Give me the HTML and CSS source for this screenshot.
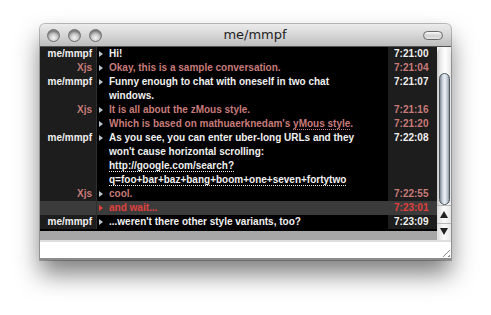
FILE: index.html
```html
<!DOCTYPE html>
<html>
<head>
<meta charset="utf-8">
<link rel="stylesheet" href="styles.css">
</head>
<body>
<div class="shadow">
<div class="window">
  <div class="titlebar">
    <div class="lights"><span class="light"></span><span class="light"></span><span class="light"></span></div>
    <div class="title">me/mmpf</div>
    <div class="pillbox"><span class="pill"></span></div>
  </div>
  <div class="main">
    <div class="chat">
      <div class="rows">
        <div class="row me"><div class="name">me/mmpf</div><div class="msg"><span class="arrow"></span><span class="text">Hi!</span></div><div class="time">7:21:00</div></div>
        <div class="row xjs"><div class="name">Xjs</div><div class="msg"><span class="arrow"></span><span class="text">Okay, this is a sample conversation.</span></div><div class="time">7:21:04</div></div>
        <div class="row me"><div class="name">me/mmpf</div><div class="msg"><span class="arrow"></span><span class="text">Funny enough to chat with oneself in two chat windows.</span></div><div class="time">7:21:07</div></div>
        <div class="row xjs"><div class="name">Xjs</div><div class="msg"><span class="arrow"></span><span class="text">It is all about the zMous style.</span></div><div class="time">7:21:16</div></div>
        <div class="row xjs"><div class="name"></div><div class="msg"><span class="arrow"></span><span class="text">Which is based on mathuaerknedam's <a class="link">yMous style</a>.</span></div><div class="time">7:21:20</div></div>
        <div class="row me"><div class="name">me/mmpf</div><div class="msg"><span class="arrow"></span><span class="text">As you see, you can enter uber-long URLs and they won't cause horizontal scrolling: <a class="link">http://google.com/search?<br>q=foo+bar+baz+bang+boom+one+seven+fortytwo</a></span></div><div class="time">7:22:08</div></div>
        <div class="row xjs"><div class="name">Xjs</div><div class="msg"><span class="arrow"></span><span class="text">cool.</span></div><div class="time">7:22:55</div></div>
        <div class="row alert"><div class="name"></div><div class="msg"><span class="arrow"></span><span class="text">and wait...</span></div><div class="time">7:23:01</div></div>
        <div class="row me"><div class="name">me/mmpf</div><div class="msg"><span class="arrow"></span><span class="text">...weren't there other style variants, too?</span></div><div class="time">7:23:09</div></div>
      </div>
      <div class="filler"></div>
    </div>
    <div class="scrollbar">
      <div class="track"><div class="thumb"></div></div>
      <div class="btn up"><span class="tri-up"></span></div>
      <div class="btn down"><span class="tri-down"></span></div>
    </div>
  </div>
  <div class="input"><span class="grip"></span></div>
</div>
</div>
</body>
</html>
```

FILE: styles.css
```css
html, body {
  margin: 0;
  padding: 0;
  background: #ffffff;
}
body {
  padding: 24px 0 0 40px;
  min-height: 315px;
  box-sizing: border-box;
}
.shadow {
  width: 411px;
  height: 236px;
  border-radius: 5px 5px 0 0;
  box-shadow: 0 14px 24px rgba(0,0,0,0.5), 0 0 0 1px rgba(0,0,0,0.25);
}
.window {
  width: 411px;
  height: 236px;
  display: flex;
  flex-direction: column;
  border-radius: 5px 5px 0 0;
  background: #a7a7a7;
  overflow: hidden;
}
.titlebar {
  height: 22px;
  flex: none;
  display: flex;
  align-items: center;
  background: linear-gradient(#ececec, #d6d6d6 50%, #bdbdbd);
  border-bottom: 1px solid #555;
  font-family: "DejaVu Sans", sans-serif;
}
.lights {
  width: 90px;
  box-sizing: border-box;
  padding-left: 7px;
  display: flex;
  gap: 8px;
}
.light {
  width: 13px;
  height: 13px;
  box-sizing: border-box;
  border-radius: 50%;
  border: 1px solid #6f6f6f;
  background: radial-gradient(circle at 50% 72%, #f6f6f6 0, #cfcfcf 35%, #9d9d9d 75%, #8a8a8a 100%);
  box-shadow: inset 0 2px 2px rgba(0,0,0,0.25);
}
.title {
  flex: 1;
  text-align: center;
  font-size: 13px;
  color: #1e1e1e;
  line-height: 22px;
}
.pillbox {
  width: 71px;
  box-sizing: border-box;
  padding-right: 8px;
  display: flex;
  justify-content: flex-end;
}
.pill {
  width: 20px;
  height: 9px;
  box-sizing: border-box;
  border: 1px solid #6a6a6a;
  border-radius: 5px;
  background: linear-gradient(#fafafa, #d0d0d0 55%, #e8e8e8);
}
.main {
  height: 193px;
  flex: none;
  display: flex;
}
.chat {
  flex: 1;
  display: flex;
  flex-direction: column;
}
.rows {
  background: #000;
  padding-bottom: 2px;
  font-family: "Liberation Sans", Arial, sans-serif;
  font-weight: bold;
  font-size: 10px;
  line-height: 14px;
}
.row {
  display: grid;
  grid-template-columns: 57px 1fr 49px;
}
.name {
  background: #1d1d1d;
  border-right: 1px solid #2e2e2e;
  text-align: right;
  padding-right: 4px;
}
.msg {
  display: flex;
  padding-right: 18px;
}
.arrow {
  flex: none;
  width: 0;
  height: 0;
  margin: 4px 6px 0 2px;
  border-left: 4px solid #b8c4d0;
  border-top: 3px solid transparent;
  border-bottom: 3px solid transparent;
}
.text {
  flex: 1;
}
.time {
  background: #1d1d1d;
  padding-left: 6px;
}
.me { color: #f0f0f0; }
.xjs { color: #c77b79; }
.alert { color: #e0403e; }
.alert .name, .alert .msg, .alert .time { background: #3b3b3b; }
.alert .arrow { border-left-color: #e0403e; }
.link {
  text-decoration: none;
  border-bottom: 1px dotted currentColor;
}
.filler {
  flex: 1;
  background: #a7a7a7;
}
.scrollbar {
  width: 14px;
  flex: none;
  display: flex;
  flex-direction: column;
  background: #f2f2f2;
}
.track {
  flex: 1;
  border-radius: 7px 7px 0 0;
  background: linear-gradient(to right, #c8c8c8, #efefef 30%, #ffffff 60%, #e6e6e6);
  padding: 26px 1px 0 2px;
  display: flex;
  flex-direction: column;
}
.thumb {
  height: 132px;
  border-radius: 6px;
  border: 1px solid #4e5660;
  box-sizing: border-box;
  background: linear-gradient(to right, #7d8894, #cdd5de 30%, #eef2f6 55%, #b5bec8 85%, #8a95a0);
}
.btn {
  height: 17px;
  display: flex;
  align-items: center;
  justify-content: center;
  background: linear-gradient(to right, #dcdcdc, #fafafa 50%, #e8e8e8);
  border-top: 1px solid #b8b8b8;
}
.tri-up {
  width: 0; height: 0;
  border-left: 4px solid transparent;
  border-right: 4px solid transparent;
  border-bottom: 7px solid #222;
}
.tri-down {
  width: 0; height: 0;
  border-left: 4px solid transparent;
  border-right: 4px solid transparent;
  border-top: 7px solid #222;
}
.input {
  height: 20px;
  flex: none;
  box-sizing: border-box;
  background: #fff;
  border-top: 2px solid #dedede;
  border-bottom: 2px solid #8c8c8c;
  display: flex;
  justify-content: flex-end;
  align-items: flex-end;
}
.grip {
  width: 11px;
  height: 11px;
  margin: 0 1px 1px 0;
  background: repeating-linear-gradient(135deg, transparent 0 2px, #8a8a8a 2px 3px, transparent 3px 4px);
  clip-path: polygon(100% 0, 100% 100%, 0 100%);
}
```
